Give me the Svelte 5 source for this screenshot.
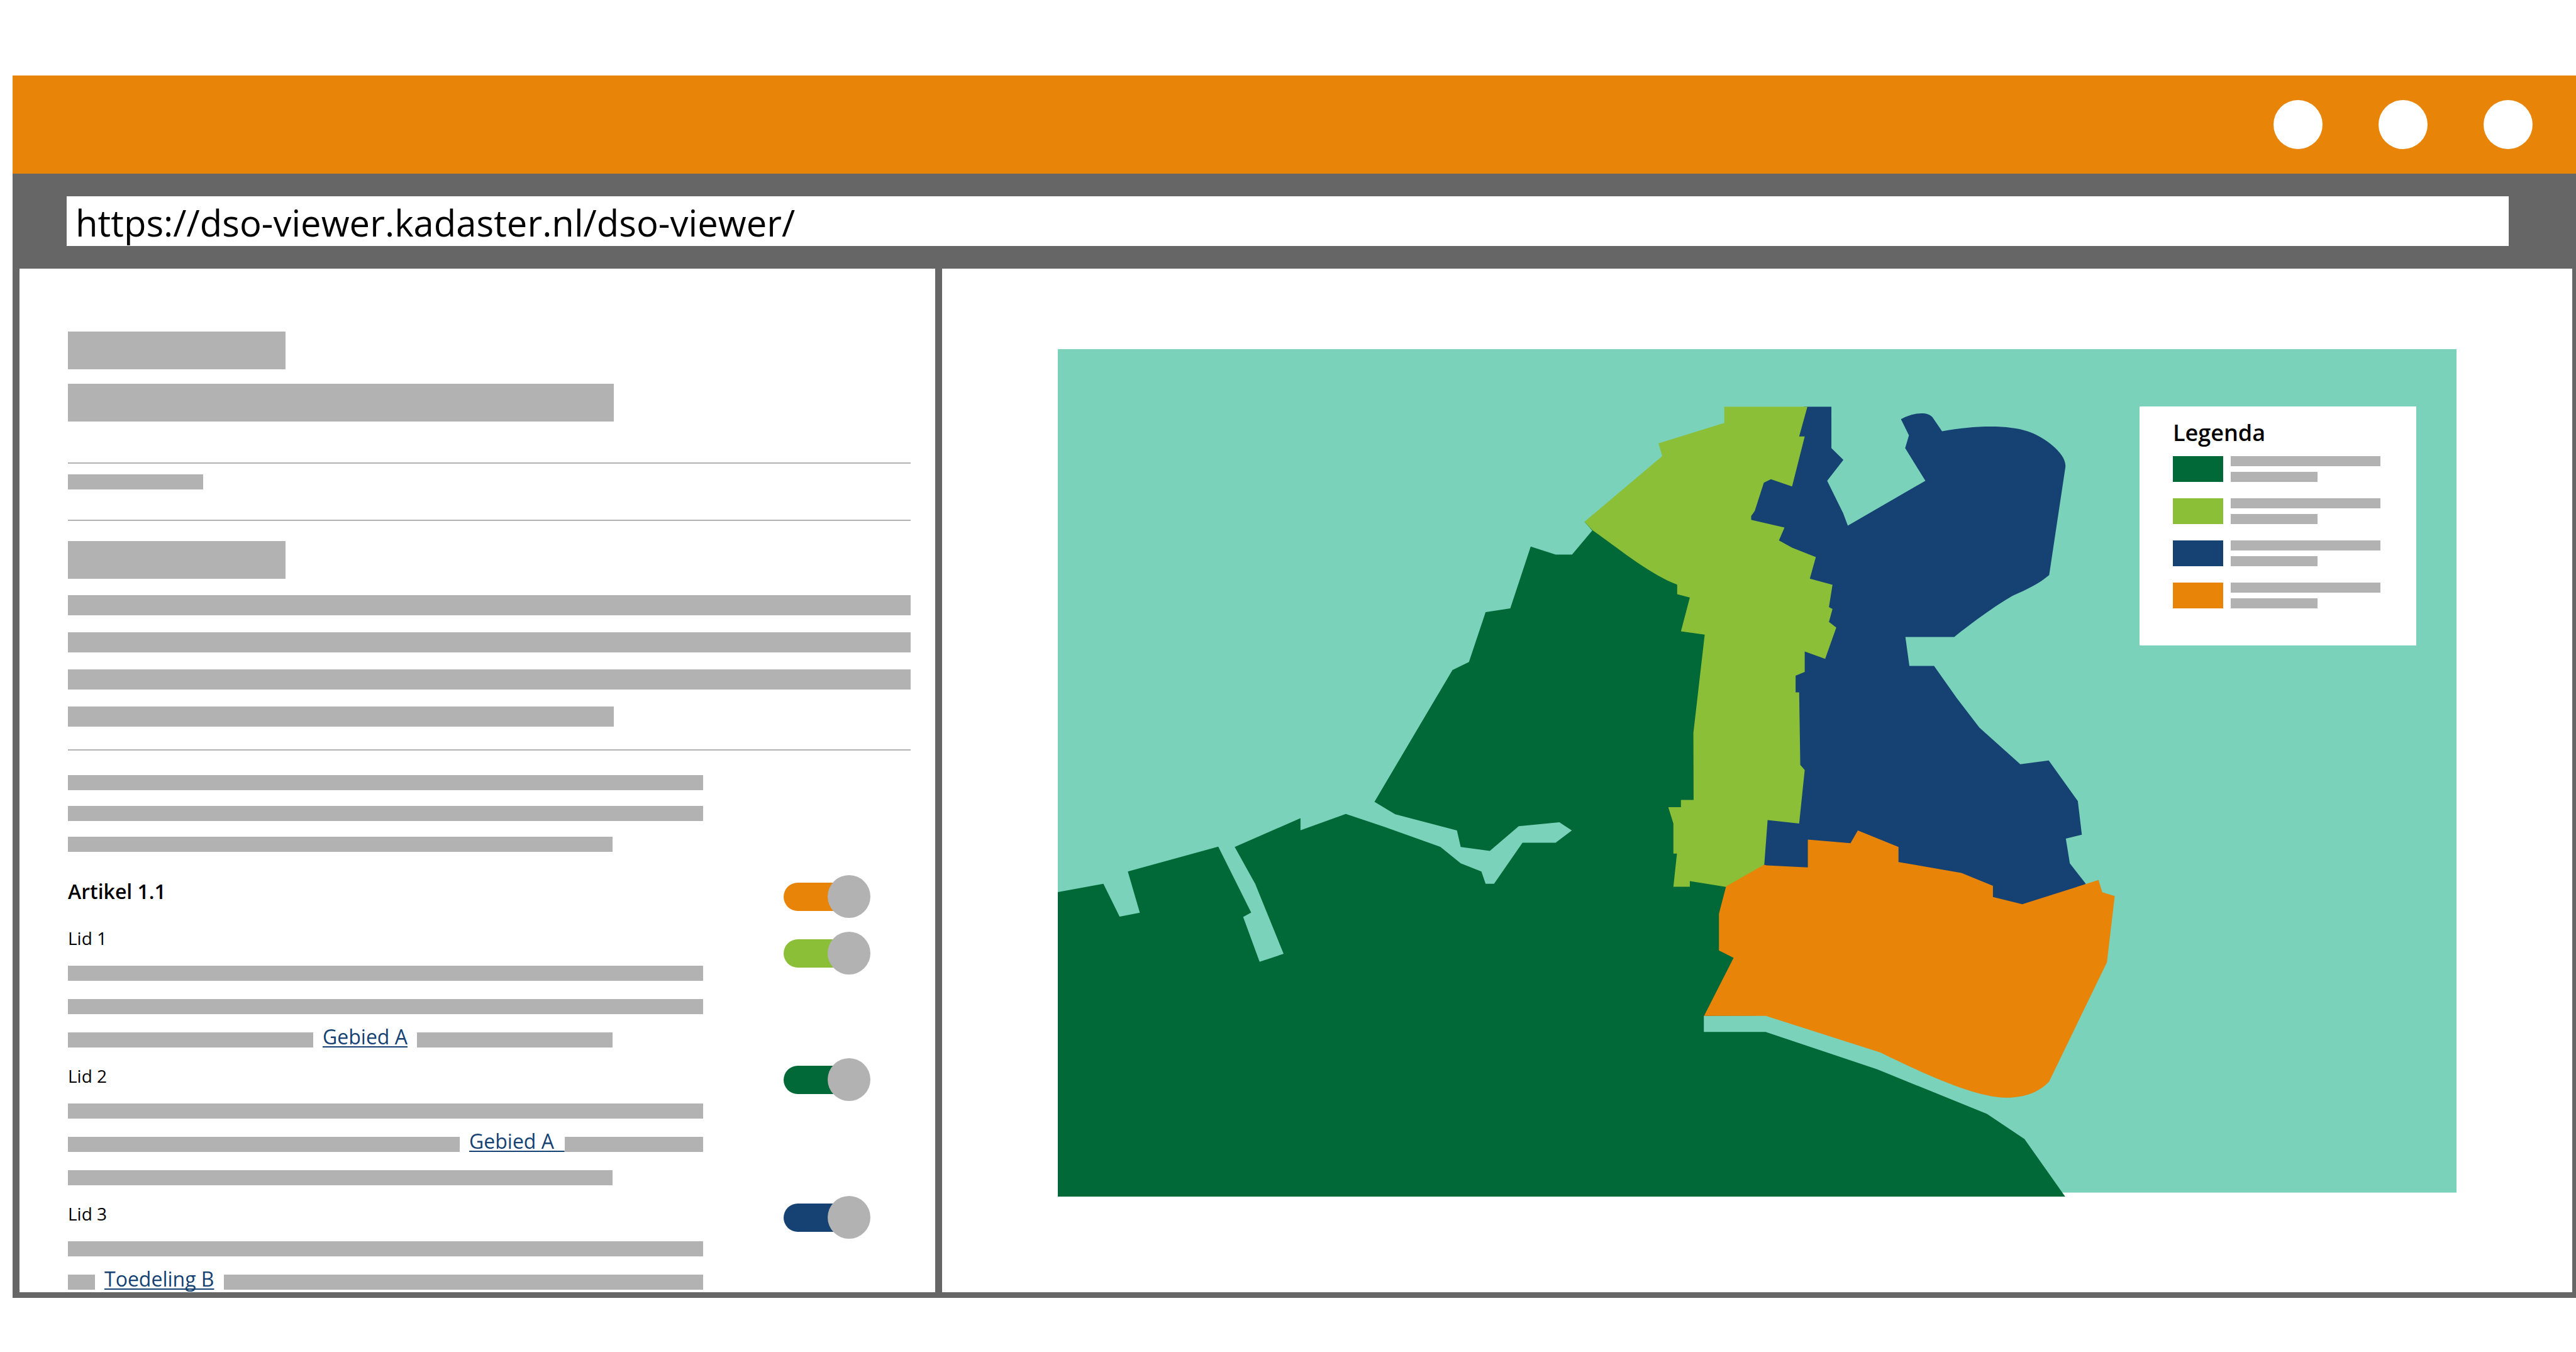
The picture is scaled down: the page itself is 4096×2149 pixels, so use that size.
<script>
  const intro = ['wide', 'wide', 'medium'];

  const lids = [
    {
      id: 1,
      color: 'lime',
      lines: [
        { width: 'wide' },
        { width: 'wide' },
        { width: 'medium', lead: 'lead-long', link: 'Gebied A' },
      ],
    },
    {
      id: 2,
      color: 'green',
      lines: [
        { width: 'wide' },
        { width: 'wide', lead: 'lead-longer', link: 'Gebied A\u00a0\u00a0', flush: true },
        { width: 'medium' },
      ],
    },
    {
      id: 3,
      color: 'navy',
      lines: [
        { width: 'wide' },
        { width: 'wide', lead: 'lead-short', link: 'Toedeling B' },
      ],
    },
  ];

  const legend = ['green', 'lime', 'navy', 'orange'];
</script>

<div class="browser">
  <header class="titlebar">
    <button type="button" class="window-button" aria-label="Minimaliseren"></button>
    <button type="button" class="window-button" aria-label="Maximaliseren"></button>
    <button type="button" class="window-button" aria-label="Sluiten"></button>
  </header>

  <div class="addressbar">
    <input
      class="address"
      type="text"
      aria-label="Adres"
      spellcheck="false"
      value="https://dso-viewer.kadaster.nl/dso-viewer/"
    />
  </div>

  <div class="panes">
    <main class="document">
      <div class="heading-block">
        <div class="bar tall narrow"></div>
        <div class="bar tall half"></div>
      </div>

      <div class="meta-block">
        <div class="bar small tag"></div>
      </div>

      <div class="body-block">
        <div class="bar tall narrow"></div>
        <div class="paragraph">
          <div class="bar text"></div>
          <div class="bar text"></div>
          <div class="bar text"></div>
          <div class="bar text half"></div>
        </div>
      </div>

      <div class="intro-block">
        {#each intro as width}
          <div class="bar small {width}"></div>
        {/each}
      </div>

      <section class="article">
        <h2><label for="toggle-article">Artikel 1.1</label></h2>
        <input id="toggle-article" class="toggle orange" type="checkbox" checked />
      </section>

      {#each lids as lid}
        <section class="lid" class:first={lid.id === 1}>
          <div class="lid-body">
            <h3><label for="toggle-{lid.id}">Lid {lid.id}</label></h3>
            <div class="lines">
              {#each lid.lines as line}
                {#if line.link}
                  <div class="line {line.width}">
                    <div class="bar small {line.lead}"></div>
                    <a href="#gebied" class:flush={line.flush}>{line.link}</a>
                    <div class="bar small rest"></div>
                  </div>
                {:else}
                  <div class="bar small {line.width}"></div>
                {/if}
              {/each}
            </div>
          </div>
          <input id="toggle-{lid.id}" class="toggle {lid.color}" type="checkbox" checked />
        </section>
      {/each}
    </main>

    <div class="map-pane">
      <div class="map">
        <svg viewBox="2381 785 3147 1906" role="img" aria-label="Kaart met gebieden">
          <rect class="water" x="2381" y="785" width="3147" height="1897" />
          <path
            class="area-green"
            d="M2381 2006 L2483.5 1987.5 L2520 2061.5 L2565.5 2052.5 L2538.5 1960 L2742 1904 L2816 2052 L2798 2062 L2835 2163 L2889 2145 L2825 1987.5 L2779 1904.5 L2927 1840 L2927 1867 L3029 1830.5 L3113.5 1858.5 L3242 1904.5 L3287.5 1941.5 L3334 1960 L3343.5 1987.5 L3362.5 1987.5 L3426.5 1895 L3501 1895 L3537.5 1867.5 L3509.5 1849 L3418 1858 L3353 1913.5 L3287.5 1904.5 L3279 1867.5 L3140 1831 L3093.5 1803 L3269 1506.5 L3306 1488.5 L3343.5 1376.5 L3399 1368 L3445 1229 L3501 1247 L3538 1247 L3583.5 1193 L3566 1173 L3900 1250 L3900 1980 L3940 2000 L3950 2284 L3834.5 2284.5 L3834.5 2320.5 L3973.5 2320.5 L4225 2405 L4471.5 2505 L4556 2561.5 L4647.5 2691 L2381 2691 Z"
          />
          <path
            class="area-navy"
            d="M4060 914.5 L4121.5 914.5 L4121.5 1007.5 L4148.5 1034 L4112 1081 L4148 1154 L4158.5 1182 L4333 1081 L4287.5 1007.5 L4296 979 L4278 942.5 C4302 929 4336 923 4349 938 L4370.5 969.5 C4445 956 4520 955 4564 970 C4600 982 4652 1020 4648 1050.5 L4611.5 1293 C4590 1312 4560 1326 4533 1338 C4505 1352 4440 1398 4398 1432.5 L4288 1432.5 L4297 1497.5 L4352.5 1497.5 L4403.5 1569.5 L4454.5 1636 L4546.5 1718.5 L4610.5 1710 L4676 1801.5 L4685 1877 L4649 1886 L4658 1941.5 L4694 1987.5 L4600 2060 L4100 2060 L3968 1946 L3930 1900 L3930 1100 Z"
          />
          <path
            class="area-lime"
            d="M3880.5 914.5 L4067.5 914.5 L4049 981.5 L4061.5 981.5 L4033 1094 L3985.5 1077.5 L3969.5 1085.5 L3949 1149 L3941 1160.5 L3941 1169 L4016 1186 L4003.5 1215 L4033 1231.5 L4086.5 1252.5 L4073 1301 L4124 1315 L4116 1365 L4124 1369.5 L4116 1398.5 L4132.5 1411 L4107.5 1481.5 L4061.5 1465 L4061.5 1511 L4041 1519.5 L4041 1557 L4049 1557 L4051.5 1720 L4061.5 1731.5 L4049 1852 L3978 1844 L3970.5 1944.5 L3884.5 1994.5 L3803 1981.5 L3803 1994 L3766 1994 L3774 1919.5 L3766 1919.5 L3766 1852 L3754.5 1815 L3783 1815 L3783 1799 L3811.5 1799 L3811 1648 L3836.5 1427 L3783 1419.5 L3803 1343.5 L3774.5 1336 L3774.5 1314.5 C3717 1294 3640 1232 3584 1192 L3566 1173 L3741 1025.5 L3732.5 997 L3880.5 951 Z"
          />
          <path
            class="area-orange"
            d="M4068.5 1888 L4164.5 1896 L4181 1867.5 L4272.5 1904.5 L4272.5 1938.5 L4414 1963 L4485 1992 L4485 2017 L4551 2033.5 L4722.5 1979 L4731 2006.5 L4759 2015 L4741.5 2164 L4611.5 2432 C4590 2456 4554 2469 4514.5 2468.5 C4445 2468 4330 2415 4232 2367 L3974 2284.5 L3835 2284.5 L3901.5 2154 L3868.5 2137.5 L3868.5 2055 L3884.5 1993.5 L3970 1944.5 L3975.5 1946 L4068.5 1950.5 Z"
          />
        </svg>

        <aside class="legend">
          <h2>Legenda</h2>
          <ul>
            {#each legend as color}
              <li>
                <span class="swatch {color}"></span>
                <span class="legend-lines">
                  <span class="legend-bar"></span>
                  <span class="legend-bar short"></span>
                </span>
              </li>
            {/each}
          </ul>
        </aside>
      </div>
    </div>
  </div>
</div>

<style>
  :global(body) {
    margin: 0;
    background: #ffffff;
  }

  .browser {
    --orange: #e88408;
    --lime: #8cbf38;
    --green: #006937;
    --navy: #154273;
    --water: #79d2b9;
    --frame: #666666;
    --bar: #b2b2b2;
    box-sizing: border-box;
    padding: 120px 0 86px 20px;
    font-family: 'Open Sans', 'Noto Sans', sans-serif;
    color: #000000;
  }

  h2,
  h3,
  ul {
    margin: 0;
    padding: 0;
  }

  .orange {
    --color: var(--orange);
  }

  .lime {
    --color: var(--lime);
  }

  .green {
    --color: var(--green);
  }

  .navy {
    --color: var(--navy);
  }

  /* Browser chrome */

  .titlebar {
    display: flex;
    justify-content: flex-end;
    align-items: center;
    gap: 89px;
    box-sizing: border-box;
    height: 156px;
    padding-right: 69px;
    background: var(--orange);
  }

  .window-button {
    width: 78px;
    height: 78px;
    padding: 0;
    border: 0;
    border-radius: 50%;
    background: #ffffff;
  }

  .addressbar {
    display: flex;
    padding: 36px 107px 36px 86px;
    background: var(--frame);
  }

  .address {
    flex: 1;
    min-width: 0;
    box-sizing: border-box;
    height: 79px;
    padding: 4px 14px 0;
    border: 0;
    border-radius: 0;
    outline: 0;
    background: #ffffff;
    color: #000000;
    font: 400 58px/75px 'Open Sans', 'Noto Sans', sans-serif;
  }

  .panes {
    display: grid;
    grid-template-columns: minmax(0, 1456fr) minmax(0, 2592fr);
    column-gap: 11px;
    border: solid var(--frame);
    border-width: 0 6px 9px 11px;
    background: var(--frame);
  }

  .document,
  .map-pane {
    background: #ffffff;
  }

  /* Document pane */

  .document {
    padding: 100px 39px 4px 77px;
  }

  .bar {
    max-width: 100%;
    background: var(--bar);
  }

  .tall {
    height: 60px;
  }

  .text {
    height: 32px;
  }

  .small {
    height: 24px;
  }

  .narrow {
    width: 346px;
  }

  .half {
    width: 868px;
  }

  .tag {
    width: 215px;
  }

  .wide {
    width: 1010px;
  }

  .medium {
    width: 866px;
  }

  .heading-block {
    display: grid;
    gap: 23px;
    padding-bottom: 65px;
    border-bottom: 2px solid var(--bar);
  }

  .meta-block {
    padding: 17px 0 48px;
    border-bottom: 2px solid var(--bar);
  }

  .body-block {
    display: grid;
    gap: 26px;
    padding: 32px 0 36px;
    border-bottom: 2px solid var(--bar);
  }

  .paragraph {
    display: grid;
    gap: 27px;
  }

  .intro-block {
    display: grid;
    gap: 25px;
    padding-top: 39px;
  }

  .article,
  .lid {
    display: flex;
    align-items: flex-start;
    justify-content: space-between;
    padding-right: 64px;
  }

  .article {
    box-sizing: border-box;
    height: 92px;
    padding-top: 37px;
  }

  .article h2 {
    padding-top: 4px;
    font-size: 32px;
    font-weight: 600;
    line-height: 44px;
  }

  .lid h3 {
    padding: 26px 0 25px;
    font-size: 28px;
    font-weight: 400;
    line-height: 38px;
  }

  .lid .toggle {
    margin-top: 17px;
  }

  .lid.first .toggle {
    margin-top: 35px;
  }

  .lines {
    display: grid;
    gap: 29px;
  }

  .line {
    display: flex;
    align-items: flex-end;
    height: 24px;
  }

  .lead-long {
    width: 390px;
  }

  .lead-longer {
    width: 623px;
  }

  .lead-short {
    width: 43px;
  }

  .rest {
    flex: 1;
  }

  .line a {
    margin: 0 15px;
    color: var(--navy);
    font-size: 32px;
    line-height: 34px;
    white-space: pre;
    text-decoration: underline 2px;
    text-underline-offset: 3px;
    text-decoration-skip-ink: none;
  }

  .line a.flush {
    margin-right: 0;
  }

  .toggle {
    appearance: none;
    display: flex;
    align-items: center;
    flex: none;
    width: 138px;
    height: 68px;
    margin: 0;
  }

  .toggle::before {
    content: '';
    width: 104px;
    height: 45px;
    border-radius: 23px 0 0 23px;
    background: var(--color);
  }

  .toggle::after {
    content: '';
    width: 68px;
    height: 68px;
    margin-left: -34px;
    border-radius: 50%;
    background: var(--bar);
  }

  /* Map pane */

  .map-pane {
    padding: 128px 184px 0;
  }

  .map {
    position: relative;
  }

  .map svg {
    display: block;
    width: 100%;
    height: auto;
  }

  .water {
    fill: var(--water);
  }

  .area-green {
    fill: var(--green);
  }

  .area-navy {
    fill: var(--navy);
  }

  .area-lime {
    fill: var(--lime);
  }

  .area-orange {
    fill: var(--orange);
  }

  .legend {
    position: absolute;
    top: 91px;
    right: 64px;
    box-sizing: border-box;
    width: 440px;
    height: 380px;
    padding: 17px 53px;
    background: #ffffff;
  }

  .legend h2 {
    margin-bottom: 12px;
    font-size: 36px;
    font-weight: 600;
    line-height: 50px;
  }

  .legend ul {
    display: grid;
    gap: 26px;
    list-style: none;
  }

  .legend li {
    display: flex;
    gap: 12px;
  }

  .swatch {
    width: 80px;
    height: 41px;
    background: var(--color);
  }

  .legend-lines {
    flex: 1;
    display: flex;
    flex-direction: column;
    justify-content: space-between;
  }

  .legend-bar {
    width: 238px;
    height: 16px;
    background: var(--bar);
  }

  .legend-bar.short {
    width: 138px;
  }
</style>
